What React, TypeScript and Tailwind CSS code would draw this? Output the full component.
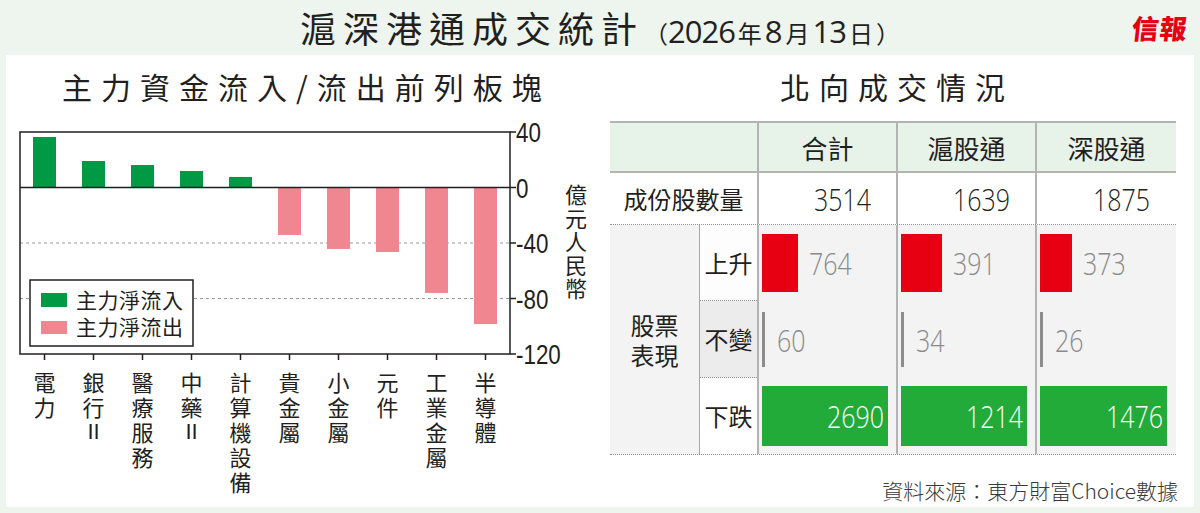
import * as React from 'react';

interface Sector {
    name: string[];
    v: number;
}

const SECTORS: Sector[] = [
    { name: ['電', '力'], v: 36.4 },
    { name: ['銀', '行', 'II'], v: 19.1 },
    { name: ['醫', '療', '服', '務'], v: 16.2 },
    { name: ['中', '藥', 'II'], v: 11.9 },
    { name: ['計', '算', '機', '設', '備'], v: 7.6 },
    { name: ['貴', '金', '屬'], v: -34.2 },
    { name: ['小', '金', '屬'], v: -44.3 },
    { name: ['元', '件'], v: -46.5 },
    { name: ['工', '業', '金', '屬'], v: -76 },
    { name: ['半', '導', '體'], v: -98.4 },
];

const COLS = [
    { name: '合計', total: 3514, up: 764, flat: 60, down: 2690, w: 'w-[139px]', bar: 126 },
    { name: '滬股通', total: 1639, up: 391, flat: 34, down: 1214, w: 'w-[139px]', bar: 126 },
    { name: '深股通', total: 1875, up: 373, flat: 26, down: 1476, w: 'w-[141px]', bar: 127 },
];

// chart geometry, svg-local coordinates
const XL = 2;
const XR = 492;
const YT = 10;
const YB = 232;
const K = (YB - YT) / 160;
const SLOT = 49;
const yOf = (v: number) => YT + (40 - v) * K;

function FlowChart() {
    const zero = yOf(0);
    return (
        <svg width={546} height={242} className="block shrink-0">
            <line x1={XL} x2={XR} y1={yOf(-40)} y2={yOf(-40)} stroke="#9a9a9a" strokeDasharray="3 3" strokeWidth={1} />
            <line x1={XL} x2={XR} y1={yOf(-80)} y2={yOf(-80)} stroke="#9a9a9a" strokeDasharray="3 3" strokeWidth={1} />
            {SECTORS.map((s, i) => {
                const cx = XL + SLOT / 2 + i * SLOT;
                const y = yOf(s.v);
                return (
                    <rect
                        key={i}
                        x={cx - 11.5}
                        width={23}
                        y={s.v > 0 ? y : zero}
                        height={Math.abs(y - zero)}
                        fill={s.v > 0 ? '#009a44' : '#f0868f'}
                    />
                );
            })}
            <line x1={XL} x2={XR} y1={zero} y2={zero} stroke="#231f20" strokeWidth={1.5} />
            <rect x={XL} y={YT} width={XR - XL} height={YB - YT} fill="none" stroke="#231f20" strokeWidth={1.5} />
            {[40, 0, -40, -80, -120].map((v) => (
                <g key={v}>
                    <line x1={XR} x2={XR + 6} y1={yOf(v)} y2={yOf(v)} stroke="#231f20" strokeWidth={1.5} />
                    <text
                        transform={`translate(${XR + 6} ${yOf(v) + 10}) scale(0.8 1)`}
                        fontSize={28}
                        fill="#231f20"
                        fontFamily="'Liberation Sans', sans-serif"
                    >
                        {v}
                    </text>
                </g>
            ))}
            {SECTORS.map((_, i) => {
                const cx = XL + SLOT / 2 + i * SLOT;
                return <line key={i} x1={cx} x2={cx} y1={YB} y2={YB + 6} stroke="#231f20" strokeWidth={1.5} />;
            })}
            <rect x={12} y={158} width={163} height={66} fill="#fff" stroke="#231f20" strokeWidth={1.5} />
            <rect x={23} y={171} width={26} height={14} fill="#009a44" />
            <rect x={23} y={199} width={26} height={13} fill="#f0868f" />
            <text x={58} y={186} fontSize={21} fill="#231f20" letterSpacing={0.5} fontFamily="'Noto Sans CJK TC', sans-serif">
                主力淨流入
            </text>
            <text x={58} y={213} fontSize={21} fill="#231f20" letterSpacing={0.5} fontFamily="'Noto Sans CJK TC', sans-serif">
                主力淨流出
            </text>
        </svg>
    );
}

function NorthTable() {
    return (
        <div className="mx-[10px] mt-[17px] w-[566px] text-[#231f20]">
            <div className="flex h-[52px] border-y-2 border-[#b3b3b3] bg-[#e7f2e9]">
                <div className="w-[147px]" />
                {COLS.map((c) => (
                    <div key={c.name} className={`${c.w} flex items-center justify-center border-l-2 border-[#b3b3b3] text-[26px]`}>
                        {c.name}
                    </div>
                ))}
            </div>
            <div className="flex h-[52px] border-b border-dotted border-[#8f8f8f]">
                <div className="flex w-[147px] items-center justify-center text-[24px]">成份股數量</div>
                {COLS.map((c) => (
                    <div
                        key={c.name}
                        className={`${c.w} flex items-center justify-center border-l-2 border-[#b3b3b3] pl-[30px] font-['Open_Sans','Lato',sans-serif] text-[32px] font-light`}
                    >
                        <span className="inline-block scale-x-[0.78]">{c.total}</span>
                    </div>
                ))}
            </div>
            <div className="flex h-[230px] border-b border-dotted border-[#8f8f8f]">
                <div className="flex w-[89px] items-center justify-center bg-[#f2f3f2] text-center text-[24px] leading-[30px]">
                    股票
                    <br />
                    表現
                </div>
                <div className="flex w-[58px] flex-col border-l border-[#a8a8a8] text-[24px]">
                    <div className="flex h-[76px] items-center justify-center border-b border-dotted border-[#8f8f8f] bg-[#fdfdfd]">上升</div>
                    <div className="flex h-[77px] items-center justify-center border-b border-dotted border-[#8f8f8f] bg-[#ececec]">不變</div>
                    <div className="flex flex-1 items-center justify-center bg-white">下跌</div>
                </div>
                {COLS.map((c) => (
                    <div
                        key={c.name}
                        className={`${c.w} flex flex-col border-l-2 border-[#b3b3b3] bg-[#f2f3f2] pl-[3px] font-['Open_Sans','Lato',sans-serif] text-[32px] font-light text-[#8a8a8a]`}
                    >
                        <div className="flex h-[76px] items-center">
                            <div className="h-[58px] bg-[#e60012]" style={{ width: Math.round((c.bar * c.up) / c.down) }} />
                            <span className="ml-[11px] inline-block origin-left scale-x-[0.78]">{c.up}</span>
                        </div>
                        <div className="flex h-[77px] items-center">
                            <div className="h-[55px] w-[3px] bg-[#8c8c8c]" />
                            <span className="ml-[12px] inline-block origin-left scale-x-[0.78]">{c.flat}</span>
                        </div>
                        <div className="flex flex-1 items-center">
                            <div className="flex h-[60px] items-center justify-end bg-[#22ab38] pr-[4px] text-white" style={{ width: c.bar }}>
                                <span className="inline-block origin-right scale-x-[0.78]">{c.down}</span>
                            </div>
                        </div>
                    </div>
                ))}
            </div>
        </div>
    );
}

export default function App() {
    return (
        <div className="flex h-[513px] w-[1200px] flex-col overflow-hidden bg-[#edf5ee] font-['Noto_Sans_CJK_TC','Liberation_Sans',sans-serif] text-[#231f20]">
            <div className="grid h-[55px] grid-cols-[1fr_auto_1fr] items-center">
                <div />
                <div className="flex items-baseline">
                    <span className="text-[36px] leading-none tracking-[7px]">滬深港通成交統計</span>
                    <span className="text-[24px] leading-none">（</span>
                    <span className="font-['Open_Sans','Lato',sans-serif] text-[31px] leading-none tracking-[-1px]">2026</span>
                    <span className="mx-[3px] text-[24px] leading-none">年</span>
                    <span className="font-['Open_Sans','Lato',sans-serif] text-[31px] leading-none">8</span>
                    <span className="mx-[3px] text-[24px] leading-none">月</span>
                    <span className="font-['Open_Sans','Lato',sans-serif] text-[31px] leading-none tracking-[-1px]">13</span>
                    <span className="mx-[3px] text-[24px] leading-none">日</span>
                    <span className="text-[24px] leading-none">）</span>
                </div>
                <div className="flex justify-end pr-[12px]">
                    <span className="-skew-x-6 text-[27px] font-black leading-none tracking-[1px] text-[#e60012]">信報</span>
                </div>
            </div>
            <div className="mx-[6px] flex h-[452px] bg-white">
                <div className="w-[594px]">
                    <div className="pl-[56px] pt-[13px] text-[30px] leading-[36px] tracking-[9px]">主力資金流入/流出前列板塊</div>
                    <div className="ml-[12px] mt-[18px] flex">
                        <FlowChart />
                        <div className="flex w-[24px] flex-col items-center pt-[60px] text-[22px] leading-[23.5px]">
                            {['億', '元', '人', '民', '幣'].map((c) => (
                                <span key={c}>{c}</span>
                            ))}
                        </div>
                    </div>
                    <div className="ml-[14px] mt-[5px] flex">
                        {SECTORS.map((s, i) => (
                            <div key={i} className="flex w-[49px] flex-col items-center text-[22px] leading-[25px]">
                                {s.name.map((c, j) => (
                                    <span key={j} className={c === 'II' ? "font-['Liberation_Sans',sans-serif]" : ''}>
                                        {c}
                                    </span>
                                ))}
                            </div>
                        ))}
                    </div>
                </div>
                <div className="flex-1">
                    <div className="pt-[13px] text-center text-[30px] leading-[36px] tracking-[9px]">北向成交情況</div>
                    <NorthTable />
                    <div className="mt-[21px] pr-[16px] text-right text-[21px] font-light leading-[28px] text-[#3a3a3a]">資料來源：東方財富Choice數據</div>
                </div>
            </div>
        </div>
    );
}
